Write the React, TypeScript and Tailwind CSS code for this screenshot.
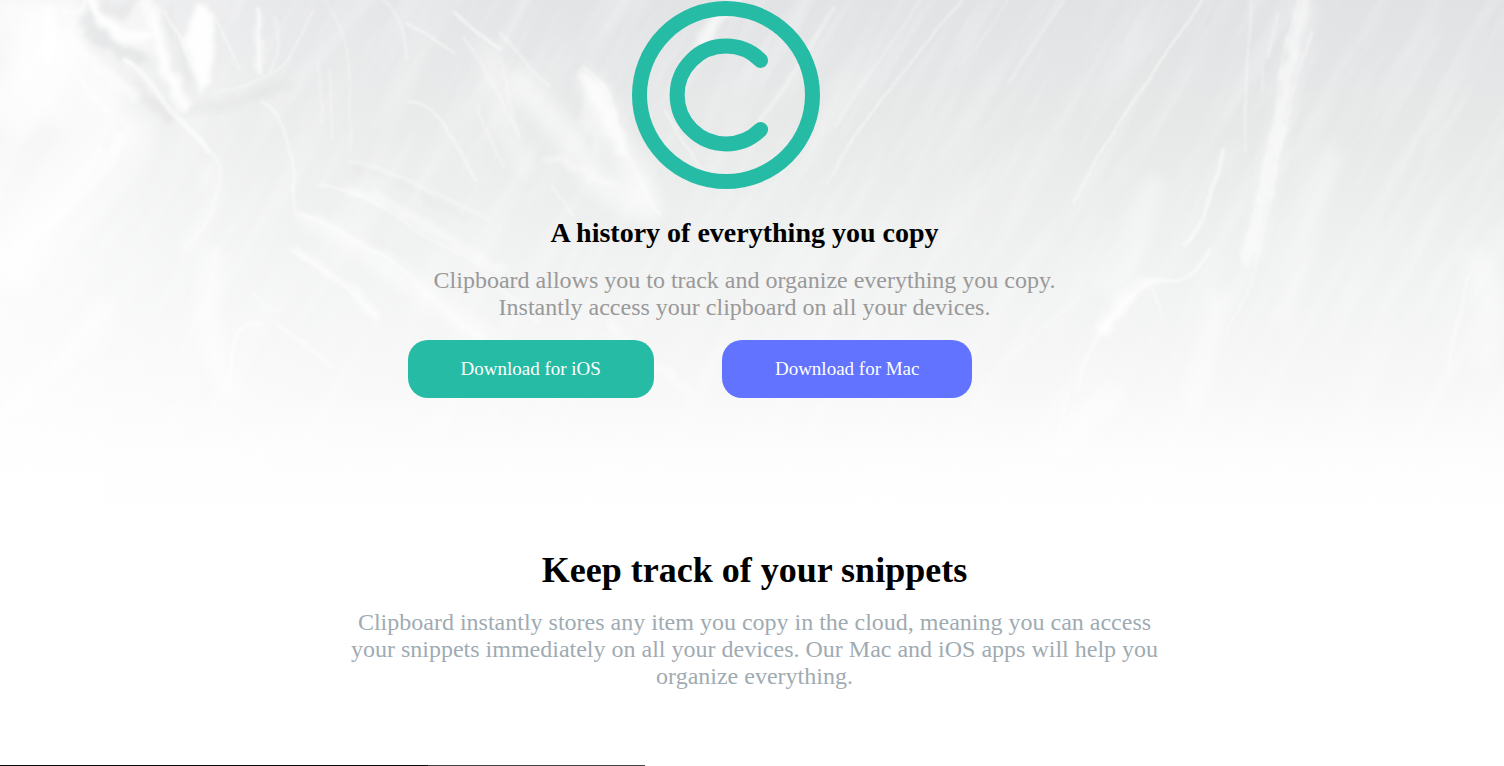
type Streak = { d: string; w: number; o: number };

const softStreaks: Streak[] = [
  { d: "M0 120 C40 90 60 40 50 0", w: 60, o: 0.6 },
  { d: "M20 0 C30 80 60 110 110 130 C60 170 20 240 0 290", w: 50, o: 0.5 },
  { d: "M125 125 C95 180 50 220 0 270", w: 26, o: 0.5 },
  { d: "M150 135 C120 200 70 230 20 290", w: 16, o: 0.5 },
  { d: "M60 30 C70 60 95 80 120 105", w: 34, o: 0.6 },
  { d: "M205 165 C228 190 205 225 180 255", w: 10, o: 0.6 },
  { d: "M300 215 C360 240 410 290 490 340", w: 16, o: 0.6 },
  { d: "M240 400 C210 370 200 310 215 250", w: 24, o: 0.5 },
  { d: "M110 300 C80 350 40 380 0 420", w: 24, o: 0.5 },
  { d: "M510 70 C530 100 570 130 590 170 C600 190 630 200 660 215", w: 26, o: 0.5 },
  { d: "M584 75 C605 100 615 150 650 200", w: 22, o: 0.6 },
  { d: "M480 40 C500 90 500 130 530 175", w: 18, o: 0.35 },
  { d: "M1160 180 C1130 220 1150 260 1100 290", w: 20, o: 0.4 },
  { d: "M1335 150 C1310 210 1300 260 1280 330", w: 18, o: 0.35 },
  { d: "M1310 0 C1285 80 1275 170 1250 260", w: 15, o: 0.45 },
  { d: "M1220 290 C1215 320 1200 370 1190 410", w: 22, o: 0.45 },
  { d: "M1060 460 C1075 430 1080 420 1120 390", w: 26, o: 0.5 },
  { d: "M1470 250 C1490 290 1500 320 1480 370", w: 26, o: 0.35 },
];

const broadStreaks: Streak[] = [
  { d: "M91 0 C95 26 124 38 148 37", w: 11, o: 0.7 },
  { d: "M148 0 C153 24 165 40 163 64 C173 78 178 88 184 106", w: 12, o: 0.65 },
  { d: "M50 10 L48 60", w: 14, o: 0.7 },
  { d: "M70 36 C90 60 110 80 135 96", w: 12, o: 0.5 },
  { d: "M257 12 C260 26 257 49 260 74", w: 7, o: 0.5 },
  { d: "M585 76 C600 96 614 118 620 148", w: 14, o: 0.5 },
  { d: "M546 158 C568 156 590 180 616 186", w: 9, o: 0.4 },
  { d: "M735 4 C718 16 708 26 702 42", w: 12, o: 0.6 },
  { d: "M1306 0 C1292 45 1287 78 1280 126 C1268 172 1259 220 1246 260", w: 12, o: 0.45 },
  { d: "M1130 300 L1102 332", w: 10, o: 0.5 },
  { d: "M297 250 C320 268 350 284 376 318", w: 9, o: 0.5 },
  { d: "M350 190 C400 200 440 238 500 270", w: 10, o: 0.4 },
  { d: "M120 140 C105 182 65 206 30 246", w: 9, o: 0.5 },
  { d: "M610 326 L655 366 L690 392", w: 8, o: 0.4 },
];

const fineStreaks: Streak[] = [
  { d: "M60 8 C64 15 78 17 84 7 L86 0", w: 3, o: 0.7 },
  { d: "M91 0 C95 24 124 38 148 35", w: 4, o: 0.8 },
  { d: "M125 60 C150 74 162 104 180 120 C190 134 199 139 209 151", w: 5, o: 0.7 },
  { d: "M199 139 C215 155 229 164 220 185 C214 208 206 228 183 249", w: 3, o: 0.45 },
  { d: "M153 14 C162 40 160 64 176 82 L186 110", w: 4, o: 0.7 },
  { d: "M78 64 C77 84 97 100 110 114", w: 3, o: 0.6 },
  { d: "M257 8 C260 24 257 49 260 74", w: 2, o: 0.8 },
  { d: "M274 18 C280 40 278 56 270 72", w: 3, o: 0.35 },
  { d: "M166 12 C172 26 184 34 189 60", w: 3, o: 0.6 },
  { d: "M216 19 C222 34 232 50 238 70", w: 2, o: 0.6 },
  { d: "M220 91 C240 88 262 82 282 66 C295 51 303 32 314 10", w: 2, o: 0.5 },
  { d: "M263 102 C280 109 288 138 293 170 L294 210", w: 3, o: 0.5 },
  { d: "M325 0 C337 18 347 36 349 68 L350 151", w: 2, o: 0.35 },
  { d: "M319 60 L322 125 M330 70 L332 140", w: 2, o: 0.4 },
  { d: "M382 0 C401 12 405 40 407 60", w: 2, o: 0.5 },
  { d: "M405 22 C423 31 436 42 455 53", w: 2, o: 0.7 },
  { d: "M455 12 C472 28 483 38 500 49", w: 3, o: 0.7 },
  { d: "M464 38 C482 56 493 84 515 130", w: 2, o: 0.5 },
  { d: "M410 102 C437 100 457 146 476 181", w: 3, o: 0.5 },
  { d: "M478 105 C485 130 493 146 503 166", w: 2, o: 0.5 },
  { d: "M350 161 C395 167 435 195 490 220", w: 3, o: 0.35 },
  { d: "M318 186 C360 184 405 225 455 252 C480 264 510 300 540 324", w: 3, o: 0.45 },
  { d: "M297 214 C330 219 350 243 385 257 C420 280 452 324 492 342", w: 4, o: 0.5 },
  { d: "M290 249 C308 263 345 282 376 315", w: 3, o: 0.5 },
  { d: "M262 324 C230 319 236 352 228 380 L215 406", w: 3, o: 0.75 },
  { d: "M280 325 C300 342 315 350 333 368", w: 5, o: 0.5 },
  { d: "M112 305 C80 330 57 370 0 418", w: 3, o: 0.5 },
  { d: "M252 290 C260 306 266 311 283 308", w: 2, o: 0.5 },
  { d: "M218 250 C213 280 210 290 190 330", w: 2, o: 0.5 },
  { d: "M500 34 C520 54 532 75 550 86", w: 3, o: 0.4 },
  { d: "M584 68 C610 85 616 112 622 150 C640 168 640 194 660 214", w: 3, o: 0.5 },
  { d: "M500 60 C510 85 508 112 520 140", w: 3, o: 0.35 },
  { d: "M552 185 L572 215", w: 2, o: 0.5 },
  { d: "M702 42 C692 66 680 83 675 106", w: 3, o: 0.5 },
  { d: "M665 110 C675 135 695 156 705 176", w: 2, o: 0.6 },
  { d: "M834 8 C813 42 797 69 783 88 L758 123", w: 4, o: 0.4 },
  { d: "M920 0 C900 32 878 58 865 80 L835 124", w: 4, o: 0.25 },
  { d: "M962 0 C934 35 904 73 888 92 C860 122 842 157 828 183", w: 2, o: 0.6 },
  { d: "M1008 0 L990 28 L958 68", w: 2, o: 0.25 },
  { d: "M1065 0 C1045 26 1030 53 1009 82", w: 2, o: 0.5 },
  { d: "M1050 0 L1040 16 M1058 2 L1020 62", w: 1, o: 0.4 },
  { d: "M1202 0 C1185 31 1168 49 1156 67 C1139 95 1115 124 1098 158 L1072 202", w: 2, o: 0.7 },
  { d: "M1251 0 C1248 42 1245 90 1245 152", w: 2, o: 0.5 },
  { d: "M1277 12 L1269 58 M1263 68 L1262 90", w: 2, o: 0.45 },
  { d: "M1299 0 C1284 45 1280 78 1275 120 C1264 172 1255 220 1242 260", w: 2, o: 0.4 },
  { d: "M1312 32 C1296 72 1285 120 1276 170 C1270 210 1260 250 1250 288 L1222 336", w: 2, o: 0.5 },
  { d: "M1222 150 L1217 176 C1203 197 1212 222 1184 245", w: 4, o: 0.6 },
  { d: "M1210 250 C1195 275 1184 287 1150 279 L1118 310 C1095 332 1086 360 1078 390", w: 4, o: 0.55 },
  { d: "M1152 288 L1163 322", w: 2, o: 0.5 },
  { d: "M1468 276 C1462 300 1454 340 1447 370", w: 3, o: 0.5 },
  { d: "M1068 395 L1060 430 L1054 470", w: 3, o: 0.6 },
  { d: "M1080 298 L1040 330 L1005 360", w: 2, o: 0.4 },
];

const shadows: Streak[] = [
  { d: "M86 22 C98 42 116 48 140 58", w: 14, o: 0.05 },
  { d: "M105 5 C118 18 125 16 132 4", w: 12, o: 0.03 },
  { d: "M136 90 C148 98 158 104 168 116", w: 12, o: 0.04 },
  { d: "M192 108 C225 110 255 96 284 84", w: 12, o: 0.025 },
  { d: "M168 10 L188 80", w: 5, o: 0.03 },
  { d: "M355 168 C398 176 430 205 470 220", w: 4, o: 0.02 },
  { d: "M300 204 C330 217 352 236 398 252", w: 3, o: 0.02 },
  { d: "M120 122 L106 146", w: 4, o: 0.02 },
];

function MarbleBackdrop() {
  return (
    <svg
      className="absolute inset-0 h-full w-full"
      viewBox="0 0 1504 520"
      preserveAspectRatio="xMidYMin slice"
      fill="none"
      aria-hidden="true"
    >
      <defs>
        <linearGradient id="fade" x1="0" y1="0" x2="0" y2="1">
          <stop offset="0" stopColor="#e1e2e4" />
          <stop offset="0.25" stopColor="#e7e8e8" />
          <stop offset="0.5" stopColor="#f0f1f1" />
          <stop offset="0.75" stopColor="#f8f8f8" />
          <stop offset="0.88" stopColor="#fcfdfc" />
          <stop offset="1" stopColor="#ffffff" />
        </linearGradient>
        <linearGradient id="leftLight" x1="0" y1="0" x2="1" y2="0">
          <stop offset="0" stopColor="#fff" stopOpacity="0.7" />
          <stop offset="0.09" stopColor="#fff" stopOpacity="0.45" />
          <stop offset="0.2" stopColor="#fff" stopOpacity="0.2" />
          <stop offset="0.4" stopColor="#fff" stopOpacity="0.05" />
          <stop offset="1" stopColor="#fff" stopOpacity="0" />
        </linearGradient>
        <filter id="soft" x="-10%" y="-10%" width="120%" height="120%" colorInterpolationFilters="sRGB">
          <feGaussianBlur stdDeviation="8" />
        </filter>
        <filter id="broad" x="-5%" y="-5%" width="110%" height="110%" colorInterpolationFilters="sRGB">
          <feTurbulence type="fractalNoise" baseFrequency="0.06" numOctaves="3" seed="7" result="noise" />
          <feDisplacementMap in="SourceGraphic" in2="noise" scale="14" xChannelSelector="R" yChannelSelector="G" />
          <feGaussianBlur stdDeviation="2.4" />
        </filter>
        <filter id="fine" x="-5%" y="-5%" width="110%" height="110%" colorInterpolationFilters="sRGB">
          <feTurbulence type="fractalNoise" baseFrequency="0.02" numOctaves="2" seed="4" result="noise" />
          <feDisplacementMap in="SourceGraphic" in2="noise" scale="5" xChannelSelector="R" yChannelSelector="G" />
          <feGaussianBlur stdDeviation="0.9" />
        </filter>
        <filter id="grain" x="0" y="0" width="100%" height="100%" colorInterpolationFilters="sRGB">
          <feTurbulence type="fractalNoise" baseFrequency="0.05 0.006" numOctaves="5" seed="11" />
          <feColorMatrix values="0 0 0 0 1  0 0 0 0 1  0 0 0 0 1  2 0 0 0 -0.85" />
        </filter>
      </defs>
      <rect width="1504" height="520" fill="url(#fade)" />
      <rect width="1504" height="520" fill="url(#leftLight)" />
      <g transform="rotate(30 752 260)">
        <rect x="-200" y="-500" width="1900" height="1500" filter="url(#grain)" opacity="0.3" />
      </g>
      <g filter="url(#soft)" stroke="#fff">
        {softStreaks.map((s) => (
          <path key={s.d} d={s.d} strokeWidth={s.w} strokeOpacity={s.o} />
        ))}
      </g>
      <g filter="url(#broad)" strokeLinecap="round">
        {shadows.map((s) => (
          <path key={s.d} d={s.d} stroke="#303236" strokeWidth={s.w} strokeOpacity={s.o} />
        ))}
        <path d="M200 2 C209 8 214 20 215 42 L211 78 L204 98 L194 72 L183 48 L190 25 Z" fill="#fff" fillOpacity="0.9" />
        <path d="M125 18 C135 6 140 3 146 0 L153 22 L165 60 L185 105 L170 90 L150 55 L110 34 L98 16 Z" fill="#fff" fillOpacity="0.4" />
        <path d="M588 70 L610 92 L620 130 L608 120 L596 155 L580 125 Z" fill="#fff" fillOpacity="0.3" />
        <path d="M1140 274 L1172 280 L1150 288 L1125 306 L1108 338 L1096 328 L1112 300 Z" fill="#fff" fillOpacity="0.5" />
        {broadStreaks.map((s) => (
          <path key={s.d} d={s.d} stroke="#fff" strokeWidth={s.w} strokeOpacity={s.o} />
        ))}
      </g>
      <g filter="url(#fine)" stroke="#fff" strokeLinecap="round" strokeLinejoin="round" opacity="0.8">
        {fineStreaks.map((s) => (
          <path key={s.d} d={s.d} strokeWidth={s.w} strokeOpacity={s.o} />
        ))}
      </g>
    </svg>
  );
}

function Logo() {
  return (
    <svg
      className="mr-[37px] size-[188px]"
      viewBox="0 0 188 188"
      fill="none"
      stroke="#26bba5"
      strokeWidth="15"
      strokeLinecap="round"
      role="img"
      aria-label="Clipboard"
    >
      <circle cx="94" cy="94" r="86.5" />
      <path d="M128.6 59.4a48.9 48.9 0 1 0 0 69.2" />
    </svg>
  );
}

export default function App() {
  return (
    <main className="overflow-x-hidden bg-white font-['Liberation_Serif',serif] text-black">
      <header className="relative h-[520px]">
        <MarbleBackdrop />
        <div className="relative flex flex-col items-center pt-px pr-[15px] text-center">
          <Logo />
          <h1 className="mt-7 text-[28px] leading-8 font-bold">A history of everything you copy</h1>
          <p className="mt-[18px] max-w-[640px] text-2xl leading-[27px] text-[#999]">
            Clipboard allows you to track and organize everything you copy. Instantly access your
            clipboard on all your devices.
          </p>
          <div className="mt-[19px] mr-[109px] flex gap-[68px] text-[19px] leading-[22px] text-white">
            <button type="button" className="rounded-[20px] bg-[#26bba5] px-[53px] py-[18px]">
              Download for iOS
            </button>
            <button type="button" className="rounded-[20px] bg-[#6173ff] px-[53px] py-[18px]">
              Download for Mac
            </button>
          </div>
        </div>
      </header>
      <section className="flex flex-col items-center pt-[29px] pl-[5px] text-center">
        <h2 className="text-4xl leading-[42px] font-bold">Keep track of your snippets</h2>
        <p className="mt-[18px] max-w-[820px] text-2xl leading-[27px] text-[#9fabb2]">
          Clipboard instantly stores any item you copy in the cloud, meaning you can access your
          snippets immediately on all your devices. Our Mac and iOS apps will help you organize
          everything.
        </p>
      </section>
      <div className="mt-[75px] flex h-px">
        <div className="w-[428px] bg-[#0b0b0d]" />
        <div className="w-[217px] bg-[#444446]" />
      </div>
    </main>
  );
}
